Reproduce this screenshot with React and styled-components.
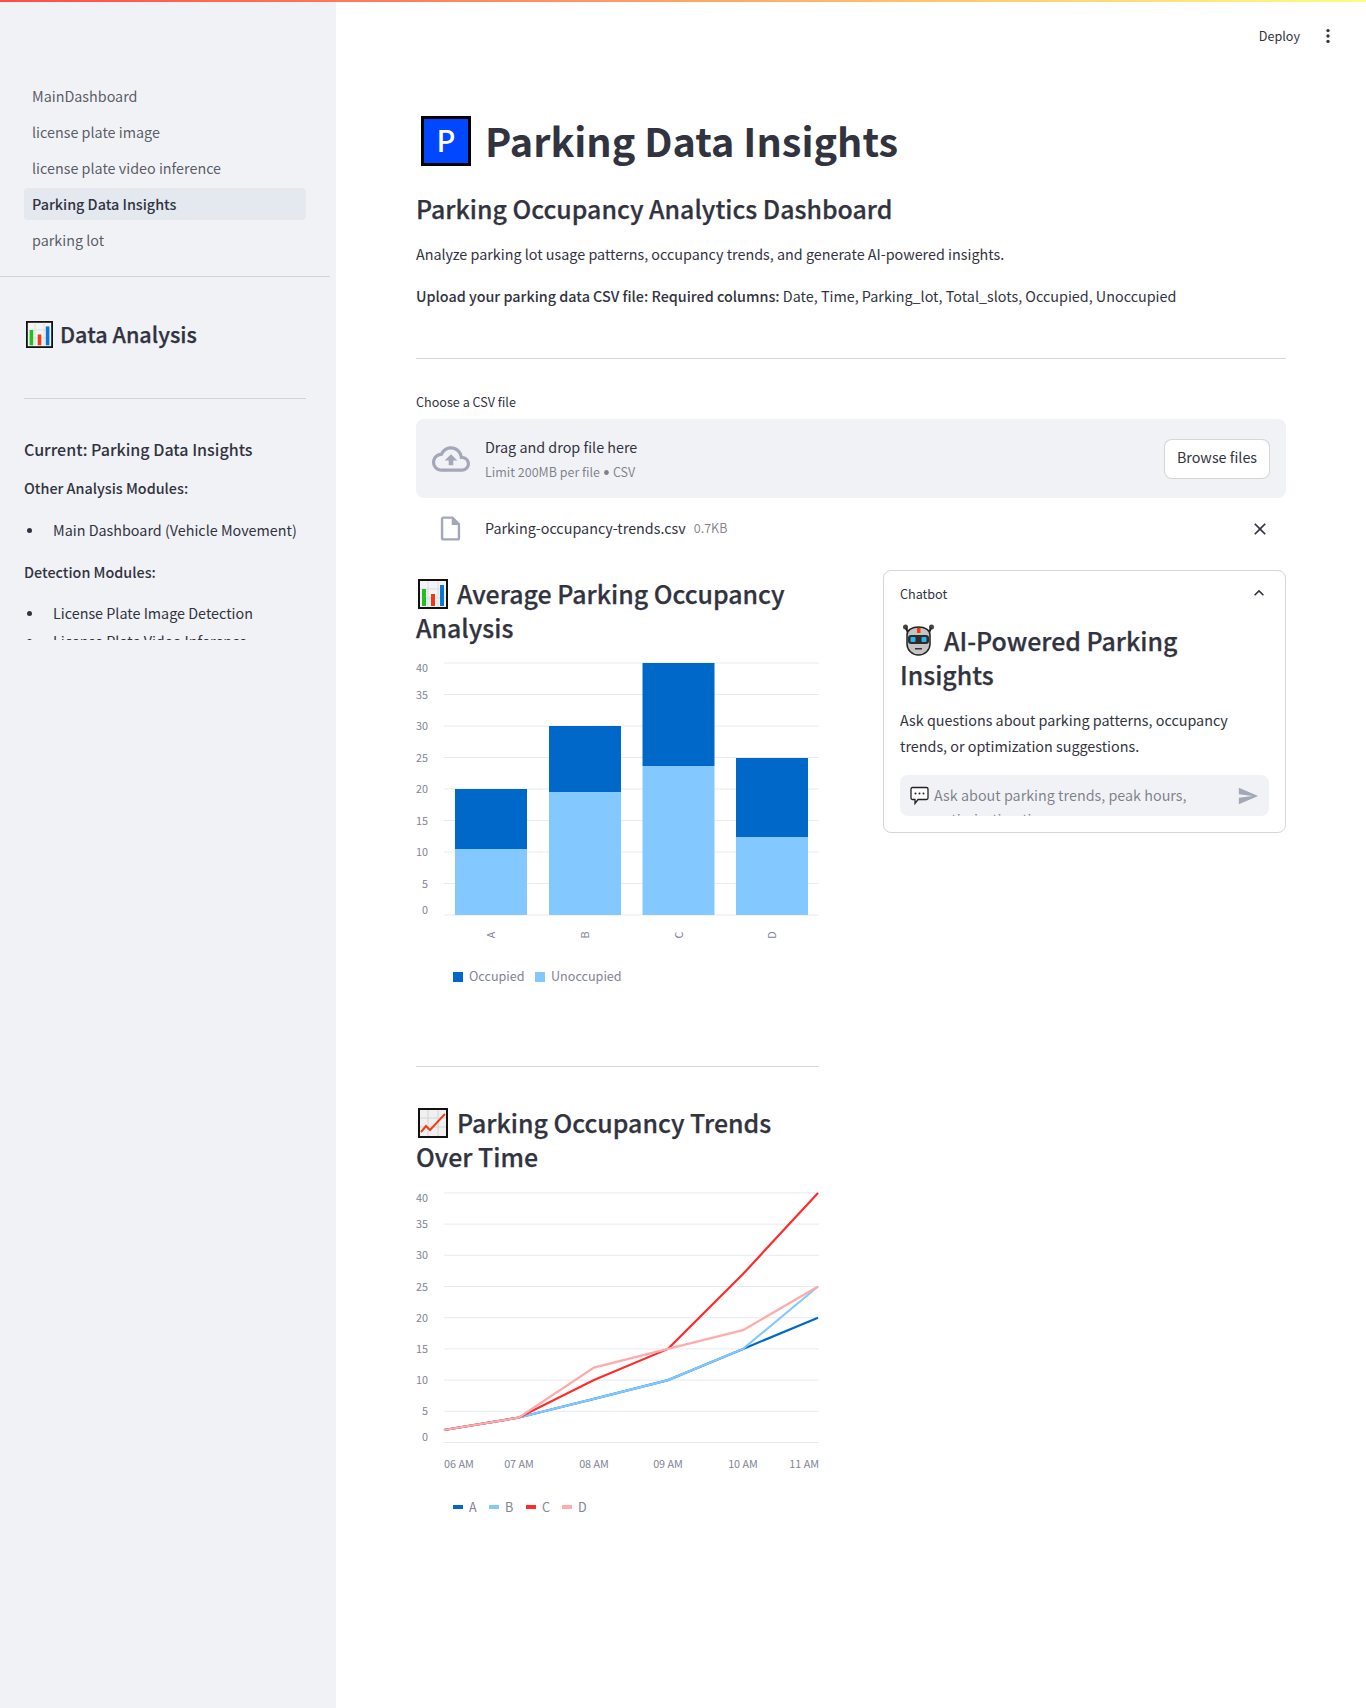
import styled, { createGlobalStyle } from "styled-components";

const GlobalStyle = createGlobalStyle`
	html, body {
		margin: 0;
		padding: 0;
		background: #fff;
	}
	body {
		font-family: "Noto Sans CJK SC", "Source Sans Pro", "Lato", sans-serif;
		color: rgb(49, 51, 63);
		font-size: 14.35px;
	}
	* {
		box-sizing: border-box;
	}
`;

const Shell = styled.div`
	position: relative;
	display: flex;
	width: 1366px;
	height: 1708px;
	overflow: hidden;
`;

const Decoration = styled.div`
	position: absolute;
	top: 0;
	left: 0;
	right: 0;
	height: 2px;
	background-image: linear-gradient(90deg, rgb(255, 75, 75), rgb(255, 253, 128));
`;

const Sidebar = styled.aside`
	width: 336px;
	flex: none;
	background: #f0f2f6;
	padding-top: 80px;
`;

const Nav = styled.nav`
	display: flex;
	flex-direction: column;
	gap: 4px;
	padding: 0 30px 0 24px;
	margin-bottom: 20px;
`;

const NavItem = styled.a`
	display: block;
	height: 32px;
	line-height: 32px;
	padding-left: 8px;
	border-radius: 4px;
	font-size: 14.35px;
	font-weight: ${(p) => (p.$active ? 500 : 400)};
	color: ${(p) => (p.$active ? "rgb(49, 51, 63)" : "rgba(49, 51, 63, 0.8)")};
	background: ${(p) => (p.$active ? "#e4e8ef" : "transparent")};
`;

const SideScroll = styled.div`
	width: 330px;
	height: 364px;
	padding: 0 24px;
	border-top: 1px solid #d0d2d8;
	overflow: hidden;
`;

const SideHeading = styled.h2`
	display: flex;
	align-items: center;
	gap: 7px;
	margin: 40px 0 0 2px;
	height: 34px;
	font-size: 21.6px;
	line-height: 34px;
	font-weight: 500;
	-webkit-text-stroke: 0.25px currentColor;
`;

const SideRule = styled.hr`
	border: 0;
	border-top: 1px solid #d0d2d8;
	margin: 47px 0 0;
`;

const SideTitle = styled.h3`
	margin: 37px 0 0;
	font-size: 16.05px;
	line-height: 26px;
	font-weight: 500;
`;

const SideLabel = styled.p`
	margin: ${(p) => p.$top}px 0 0;
	font-size: 14.35px;
	line-height: 26px;
	font-weight: 500;
`;

const SideList = styled.ul`
	list-style: none;
	margin: ${(p) => p.$top}px 0 0;
	padding: 0;
	font-size: 14.35px;
	line-height: 26px;

	li {
		display: flex;
	}

	li::before {
		content: "";
		flex: none;
		width: 5px;
		height: 5px;
		margin: 11px 21px 0 3px;
		border-radius: 50%;
		background: rgb(49, 51, 63);
	}

	li + li {
		margin-top: 2px;
	}
`;

const Main = styled.main`
	flex: 1;
	min-width: 0;
	padding: 0 80px;
`;

const Header = styled.header`
	position: absolute;
	top: 24px;
	right: 28px;
	display: flex;
	align-items: center;
	gap: 18px;
	font-size: 12.6px;
	line-height: 24px;
`;

const DotsIcon = styled.svg`
	width: 20px;
	height: 20px;
	fill: rgb(49, 51, 63);
`;

const Title = styled.h1`
	display: flex;
	align-items: center;
	gap: 14px;
	margin: 0;
	padding: 108px 0 0 5px;
	height: 172px;
	font-size: 39.6px;
	line-height: 60px;
	font-weight: 700;

	svg {
		margin-top: 2px;
	}
`;

const Subtitle = styled.h2`
	margin: 17px 0 0;
	font-size: 24.9px;
	line-height: 38px;
	font-weight: 500;
	-webkit-text-stroke: 0.25px currentColor;
`;

const Para = styled.p`
	margin: ${(p) => p.$top || 0}px 0 0;
	font-size: 14.35px;
	line-height: 26px;
`;

const Strong = styled.b`
	font-weight: 500;
`;

const Rule = styled.hr`
	border: 0;
	border-top: 1px solid #d5d6da;
	margin: ${(p) => p.$top}px 0 0;
`;

const UploadLabel = styled.div`
	margin-top: 33px;
	font-size: 12.6px;
	line-height: 20px;
`;

const Dropzone = styled.section`
	display: flex;
	align-items: center;
	height: 79px;
	margin-top: 7px;
	padding: 0 16px;
	border-radius: 8px;
	background: #f0f2f6;
`;

const CloudIcon = styled.svg`
	width: 38px;
	height: 38px;
	fill: #a3a8b8;
	flex: none;
`;

const DropText = styled.div`
	flex: 1;
	margin: 2px 0 0 15px;
	display: flex;
	flex-direction: column;
`;

const DropTitle = styled.span`
	font-size: 14.35px;
	line-height: 24px;
`;

const DropHint = styled.span`
	margin-top: 1px;
	font-size: 12.5px;
	line-height: 24px;
	color: rgba(49, 51, 63, 0.6);
`;

const Bullet = styled.span`
	font-family: "Lato", sans-serif;
`;

const BrowseButton = styled.button`
	width: 106px;
	height: 40px;
	padding: 0 0 4px;
	border: 1px solid rgba(49, 51, 63, 0.2);
	border-radius: 8px;
	background: #fff;
	color: rgb(49, 51, 63);
	font: inherit;
	font-size: 14.35px;
`;

const FileRow = styled.div`
	display: flex;
	align-items: center;
	height: 32px;
	margin-top: 13px;
	padding-left: 20px;
`;

const FileIcon = styled.svg`
	width: 29px;
	height: 29px;
	margin-top: 2px;
	fill: #a3a8b8;
	flex: none;
`;

const FileName = styled.span`
	margin-left: 20px;
	font-size: 14.35px;
`;

const FileSize = styled.span`
	flex: 1;
	margin-left: 8px;
	font-size: 12.5px;
	color: rgba(49, 51, 63, 0.6);
`;

const CloseIcon = styled.svg`
	width: 20px;
	height: 20px;
	margin: 4px 16px 0 0;
	fill: rgb(49, 51, 63);
`;

const Columns = styled.div`
	display: flex;
	gap: 64px;
	margin-top: 27px;
	align-items: flex-start;
`;

const Column = styled.div`
	flex: 1;
	min-width: 0;
`;

const ChartHeading = styled.h3`
	margin: ${(p) => p.$top || 0}px 0 ${(p) => p.$bottom || 0}px;
	padding-top: ${(p) => p.$pad || 0}px;
	font-size: 24.9px;
	line-height: 34px;
	font-weight: 500;
	-webkit-text-stroke: 0.25px currentColor;

	svg {
		vertical-align: -5px;
		margin: 0 9px 0 2px;
	}
`;

const ChartSvg = styled.svg`
	display: block;
	width: 403px;
	font-family: "Noto Sans CJK SC", sans-serif;
`;

const Expander = styled.section`
	height: 263px;
	border: 1px solid rgba(49, 51, 63, 0.2);
	border-radius: 8px;
	padding: 0 16px;
`;

const ExpanderHead = styled.div`
	display: flex;
	align-items: center;
	justify-content: space-between;
	height: 44px;
	font-size: 12.6px;
`;

const ChevronIcon = styled.svg`
	width: 20px;
	height: 20px;
	fill: rgb(49, 51, 63);
`;

const ChatInput = styled.div`
	display: flex;
	height: 41px;
	margin-top: 16px;
	padding: 7.5px 10px 0 10px;
	border-radius: 8px;
	background: #f0f2f6;
	overflow: hidden;
`;

const Placeholder = styled.div`
	flex: 1;
	margin-left: 5px;
	font-size: 14.35px;
	line-height: 24.6px;
	color: rgba(49, 51, 63, 0.6);
`;

const SendIcon = styled.svg`
	width: 22px;
	height: 22px;
	margin-top: 2px;
	fill: #a3a8b8;
	flex: none;
`;

const BarChartEmoji = ({ size = 28 }) => (
	<svg width={size} height={size} viewBox="0 0 30 30">
		<rect x="1" y="1" width="28" height="28" fill="#f4f4f4" stroke="#111" strokeWidth="2" />
		<path d="M10 2v26M20 2v26M2 10h26M2 19h26" stroke="#ddd" strokeWidth="1" />
		<rect x="4" y="10" width="4" height="17" fill="#1fc01f" />
		<rect x="13" y="15" width="4" height="12" fill="#f03a17" />
		<rect x="22" y="6" width="4" height="21" fill="#0a78d7" />
	</svg>
);

const LineChartEmoji = ({ size = 30 }) => (
	<svg width={size} height={size} viewBox="0 0 30 30">
		<rect x="1" y="1" width="28" height="28" fill="#f0f0f0" stroke="#111" strokeWidth="2" />
		<path d="M10 2v26M20 2v26M2 10h26M2 19h26" stroke="#d4d4d4" strokeWidth="1" />
		<path d="M3 24l5-6 4 4L27 6" fill="none" stroke="#ef3e1a" strokeWidth="2" />
	</svg>
);

const ParkingEmoji = () => (
	<svg width="50" height="50" viewBox="0 0 50 50">
		<rect x="1.5" y="1.5" width="47" height="47" fill="#0047ff" stroke="#000" strokeWidth="3" />
		<text x="25" y="36" textAnchor="middle" fontSize="29" fontWeight="500" fill="#fff" fontFamily="'Noto Sans CJK SC', sans-serif">P</text>
	</svg>
);

const RobotEmoji = () => (
	<svg width="33" height="33" viewBox="0 0 33 33">
		<circle cx="3.5" cy="4" r="2.5" fill="#444" />
		<circle cx="29.5" cy="4" r="2.5" fill="#444" />
		<path d="M4 5l3 7M29 5l-3 7" stroke="#222" strokeWidth="2" />
		<path d="M5 12c0-5 5-8 11.500-8S28 7 28 12v9c0 6-5 11-11.500 11S5 27 5 21z" fill="#c4c4c4" stroke="#222" strokeWidth="1.500" />
		<rect x="15" y="5" width="3.500" height="5" fill="#f03a17" />
		<rect x="6" y="12" width="21" height="9" rx="3" fill="#2b2b2b" />
		<rect x="8.500" y="14" width="5" height="5" rx="1" fill="#28b4ee" />
		<rect x="19.500" y="14" width="5" height="5" rx="1" fill="#28b4ee" />
		<rect x="13" y="25" width="7" height="1.500" fill="#333" />
	</svg>
);

const BalloonSvg = styled.svg`
	flex: none;
	margin-top: 3px;
`;

const BalloonEmoji = () => (
	<BalloonSvg width="19" height="19" viewBox="0 0 19 19">
		<path d="M2.500 1.500h14a1.500 1.500 0 0 1 1.500 1.500v9a1.500 1.500 0 0 1-1.500 1.500H8l-3 4v-4H2.500A1.500 1.500 0 0 1 1 12V3a1.500 1.500 0 0 1 1.500-1.500z" fill="#fff" stroke="#222" strokeWidth="1.300" />
		<circle cx="5.500" cy="7.500" r="1" fill="#222" />
		<circle cx="9.500" cy="7.500" r="1" fill="#222" />
		<circle cx="13.500" cy="7.500" r="1" fill="#222" />
	</BalloonSvg>
);

const tickColor = "#808495";
const gridColor = "#e6eaf1";

function YAxis({ zero, step, zeroLabel }) {
	return [40, 35, 30, 25, 20, 15, 10, 5, 0].map((v) => {
		const y = zero - (v / 5) * step;
		return (
			<g key={v}>
				<line x1="28" x2="403" y1={y} y2={y} stroke={gridColor} />
				<text x="12" y={v === 0 ? zeroLabel : v === 40 ? y + 9 : y + 4} fontSize="10.8" fill={tickColor} textAnchor="end">
					{v}
				</text>
			</g>
		);
	});
}

const bars = [
	{ name: "A", x: 39, top: 134, split: 194 },
	{ name: "B", x: 133, top: 71, split: 137 },
	{ name: "C", x: 226.500, top: 8, split: 111 },
	{ name: "D", x: 320, top: 103, split: 182 },
];

function BarChart() {
	const bottom = 260;
	return (
		<ChartSvg height="342" viewBox="0 0 403 342">
			<YAxis zero={bottom} step={31.500} zeroLabel={259} />
			{bars.map((b) => (
				<g key={b.name}>
					<rect x={b.x} y={b.top} width="72" height={b.split - b.top} fill="#0068c9" />
					<rect x={b.x} y={b.split} width="72" height={bottom - b.split} fill="#83c9ff" />
					<text
						transform={`translate(${b.x + 40} 280) rotate(-90)`}
						fontSize="10.8"
						fill={tickColor}
						textAnchor="middle"
					>
						{b.name}
					</text>
				</g>
			))}
			<rect x="37" y="317" width="10" height="10" fill="#0068c9" />
			<text x="53" y="326" fontSize="12.6" fill={tickColor}>Occupied</text>
			<rect x="119" y="317" width="10" height="10" fill="#83c9ff" />
			<text x="135" y="326" fontSize="12.6" fill={tickColor}>Unoccupied</text>
		</ChartSvg>
	);
}

const times = [
	{ label: "06 AM", x: 28, anchor: "start" },
	{ label: "07 AM", x: 103, anchor: "middle" },
	{ label: "08 AM", x: 178, anchor: "middle" },
	{ label: "09 AM", x: 252, anchor: "middle" },
	{ label: "10 AM", x: 327, anchor: "middle" },
	{ label: "11 AM", x: 403, anchor: "end" },
];

const series = [
	{ name: "A", color: "#0068c9", values: [2, 4, 7, 10, 15, 20], lx: 37 },
	{ name: "B", color: "#83c9ff", values: [2, 4, 7, 10, 15, 25], lx: 73 },
	{ name: "C", color: "#ff2b2b", values: [2, 4, 10, 15, 27, 40], lx: 110 },
	{ name: "D", color: "#ffabab", values: [2, 4, 12, 15, 18, 25], lx: 146 },
];

function LineChart() {
	const zero = 262.500;
	const toY = (v) => zero - v * 6.24;
	return (
		<ChartSvg height="350" viewBox="0 0 403 350">
			<YAxis zero={zero} step={31.200} zeroLabel={261} />
			{series.map((s) => (
				<polyline
					key={s.name}
					points={s.values.map((v, i) => `${i === 5 ? 402 : times[i].x},${toY(v)}`).join(" ")}
					fill="none"
					stroke={s.color}
					strokeWidth="2.2"
				/>
			))}
			{times.map((t) => (
				<text key={t.label} x={t.x} y="288" fontSize="10.8" fill={tickColor} textAnchor={t.anchor}>
					{t.label}
				</text>
			))}
			{series.map((s) => (
				<g key={s.name}>
					<rect x={s.lx} y="325" width="10" height="4" fill={s.color} />
					<text x={s.lx + 16} y="332" fontSize="12.6" fill={tickColor}>{s.name}</text>
				</g>
			))}
		</ChartSvg>
	);
}

export default function App() {
	return (
		<>
			<GlobalStyle />
			<Shell>
				<Decoration />
				<Sidebar>
					<Nav>
						<NavItem>MainDashboard</NavItem>
						<NavItem>license plate image</NavItem>
						<NavItem>license plate video inference</NavItem>
						<NavItem $active>Parking Data Insights</NavItem>
						<NavItem>parking lot</NavItem>
					</Nav>
					<SideScroll>
						<SideHeading>
							<BarChartEmoji size={27} />
							Data Analysis
						</SideHeading>
						<SideRule />
						<SideTitle>Current: Parking Data Insights</SideTitle>
						<SideLabel $top={13}>Other Analysis Modules:</SideLabel>
						<SideList $top={16}>
							<li>Main Dashboard (Vehicle Movement)</li>
						</SideList>
						<SideLabel $top={16}>Detection Modules:</SideLabel>
						<SideList $top={15}>
							<li>License Plate Image Detection</li>
							<li>License Plate Video Inference</li>
						</SideList>
					</SideScroll>
				</Sidebar>
				<Main>
					<Header>
						<span>Deploy</span>
						<DotsIcon viewBox="0 0 24 24">
							<circle cx="12" cy="5.500" r="2" />
							<circle cx="12" cy="12" r="2" />
							<circle cx="12" cy="18.500" r="2" />
						</DotsIcon>
					</Header>
					<Title>
						<ParkingEmoji />
						Parking Data Insights
					</Title>
					<Subtitle>Parking Occupancy Analytics Dashboard</Subtitle>
					<Para $top={14}>
						Analyze parking lot usage patterns, occupancy trends, and generate AI-powered insights.
					</Para>
					<Para $top={16}>
						<Strong>Upload your parking data CSV file: Required columns:</Strong> Date, Time,
						Parking_lot, Total_slots, Occupied, Unoccupied
					</Para>
					<Rule $top={49} />
					<UploadLabel>Choose a CSV file</UploadLabel>
					<Dropzone>
						<CloudIcon viewBox="0 0 24 24">
							<path d="M19.350 10.040C18.670 6.590 15.640 4 12 4 9.110 4 6.600 5.640 5.350 8.040 2.340 8.360 0 10.910 0 14c0 3.310 2.690 6 6 6h13c2.760 0 5-2.240 5-5 0-2.640-2.050-4.780-4.650-4.960zM19 18H6c-2.210 0-4-1.790-4-4 0-2.050 1.530-3.760 3.560-3.970l1.070-.11.5-.95C8.080 7.140 9.940 6 12 6c2.620 0 4.880 1.860 5.390 4.430l.3 1.500 1.530.11c1.560.1 2.780 1.410 2.780 2.960 0 1.650-1.350 3-3 3zM8 13h2.550v3h2.900v-3H16l-4-4z" />
						</CloudIcon>
						<DropText>
							<DropTitle>Drag and drop file here</DropTitle>
							<DropHint>Limit 200MB per file <Bullet>•</Bullet> CSV</DropHint>
						</DropText>
						<BrowseButton>Browse files</BrowseButton>
					</Dropzone>
					<FileRow>
						<FileIcon viewBox="0 0 24 24">
							<path d="M14 2H6c-1.100 0-1.990.9-1.990 2L4 20c0 1.100.89 2 1.990 2H18c1.100 0 2-.9 2-2V8l-6-6zM6 20V4h7v5h5v11H6z" />
						</FileIcon>
						<FileName>Parking-occupancy-trends.csv</FileName>
						<FileSize>0.7KB</FileSize>
						<CloseIcon viewBox="0 0 24 24">
							<path d="M19 6.410L17.590 5 12 10.590 6.410 5 5 6.410 10.590 12 5 17.590 6.410 19 12 13.410 17.590 19 19 17.590 13.410 12z" />
						</CloseIcon>
					</FileRow>
					<Columns>
						<Column>
							<ChartHeading $pad={6} $bottom={11}>
								<BarChartEmoji size={30} />
								Average Parking Occupancy Analysis
							</ChartHeading>
							<BarChart />
							<Rule $top={69} />
							<ChartHeading $top={38} $bottom={7}>
								<LineChartEmoji />
								Parking Occupancy Trends Over Time
							</ChartHeading>
							<LineChart />
						</Column>
						<Column>
							<Expander>
								<ExpanderHead>
									<span>Chatbot</span>
									<ChevronIcon viewBox="0 0 24 24">
										<path d="M12 8l-6 6 1.410 1.410L12 10.830l4.590 4.580L18 14z" />
									</ChevronIcon>
								</ExpanderHead>
								<ChartHeading $pad={8}>
									<RobotEmoji />
									AI-Powered Parking Insights
								</ChartHeading>
								<Para $top={16}>
									Ask questions about parking patterns, occupancy trends, or optimization suggestions.
								</Para>
								<ChatInput>
									<BalloonEmoji />
									<Placeholder>Ask about parking trends, peak hours, optimization tips</Placeholder>
									<SendIcon viewBox="0 0 24 24">
										<path d="M2.010 21L23 12 2.010 3 2 10l15 2-15 2z" />
									</SendIcon>
								</ChatInput>
							</Expander>
						</Column>
					</Columns>
				</Main>
			</Shell>
		</>
	);
}
